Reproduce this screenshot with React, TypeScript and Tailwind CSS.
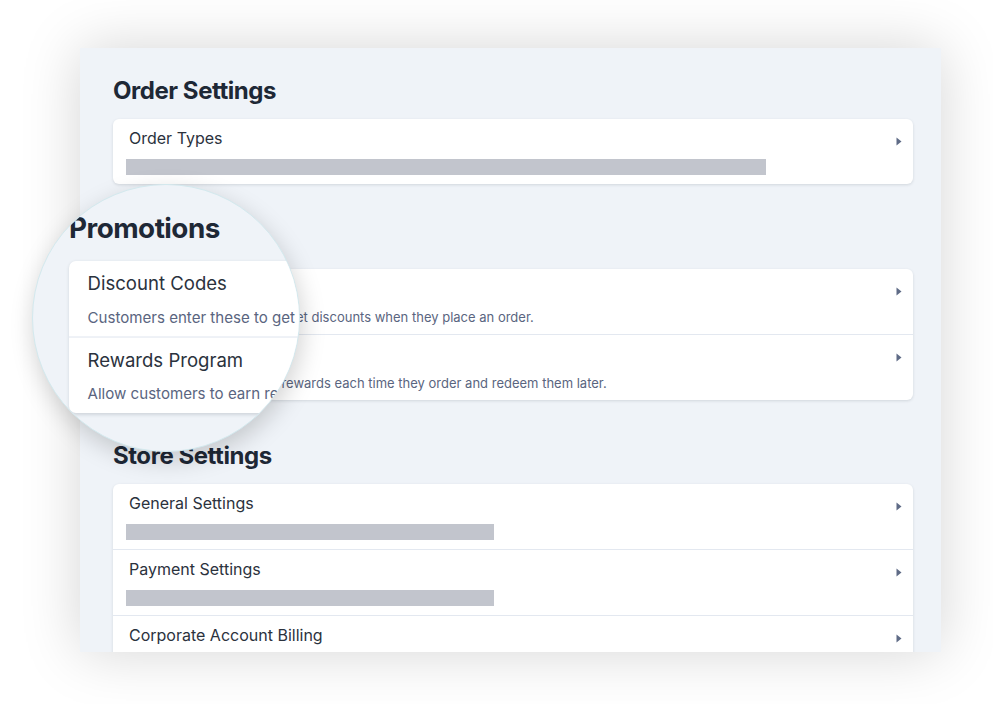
import React from 'react'

type Row = {
  title: string
  desc?: string
  bar?: number
}

const sections: { heading: string; rows: Row[] }[] = [
  { heading: 'Order Settings', rows: [{ title: 'Order Types', bar: 640 }] },
  {
    heading: 'Promotions',
    rows: [
      { title: 'Discount Codes', desc: 'Customers enter these to get discounts when they place an order.' },
      { title: 'Rewards Program', desc: 'Allow customers to earn rewards each time they order and redeem them later.' },
    ],
  },
  {
    heading: 'Store Settings',
    rows: [
      { title: 'General Settings', bar: 368 },
      { title: 'Payment Settings', bar: 368 },
      { title: 'Corporate Account Billing', bar: 368 },
    ],
  },
]

function Chevron() {
  return (
    <svg width="6" height="9" viewBox="0 0 6 9" className="absolute right-[11px] top-[18px]">
      <path d="M0.5 0.5 L5.5 4.5 L0.5 8.5 Z" fill="#5f6b86" />
    </svg>
  )
}

function SettingRow({ row, first }: { row: Row; first: boolean }) {
  return (
    <div className={'relative h-[65px] pt-[7px] ' + (first ? '' : 'border-t border-[#e3e8f0] h-[66px]')}>
      <div className="pl-4 text-[16px] leading-6 text-[#2b323d]">{row.title}</div>
      {row.bar ? (
        <div className="mt-[9px] ml-[13px] h-4 bg-[#c2c5cd]" style={{ width: row.bar }} />
      ) : (
        <div className="mt-[9px] pl-4 text-[13px] leading-4 text-[#5a6580]">{row.desc}</div>
      )}
      <Chevron />
    </div>
  )
}

function Section({ heading, rows, className }: { heading: string; rows: Row[]; className?: string }) {
  return (
    <div className={'w-[800px] ' + (className ?? '')}>
      <h2 className="text-[24px] leading-8 font-bold text-[#1e2836] tracking-[-0.45px]">{heading}</h2>
      <div className="mt-3 rounded-md bg-white shadow-[0_1px_3px_rgba(30,40,60,0.14)]">
        {rows.map((r, i) => (
          <SettingRow key={r.title} row={r} first={i === 0} />
        ))}
      </div>
    </div>
  )
}

export default function App() {
  return (
    <div
      className="relative w-[993px] h-[704px] bg-white pt-[48px] pl-[80px] overflow-hidden"
      style={{ fontFamily: 'Inter, "Noto Sans", sans-serif' }}
    >
      <div className="w-[861px] h-[604px] bg-[#eff3f8] overflow-hidden pl-[33px] pt-[27px] shadow-[0_0_55px_rgba(0,0,0,0.17)]">
        <Section {...sections[0]} />
        <Section {...sections[1]} className="mt-[41px]" />
        <Section {...sections[2]} className="mt-10" />
      </div>

      {/* magnifier lens */}
      <div className="absolute left-[32px] top-[184px] w-[268px] h-[268px] rounded-full overflow-hidden bg-[#eff3f8] border border-[#d3e9ee] shadow-[2px_8px_24px_rgba(0,0,0,0.18)]">
        <div className="absolute left-[36px] top-[25px] origin-top-left scale-[1.16]">
          <Section {...sections[1]} />
        </div>
      </div>
    </div>
  )
}
